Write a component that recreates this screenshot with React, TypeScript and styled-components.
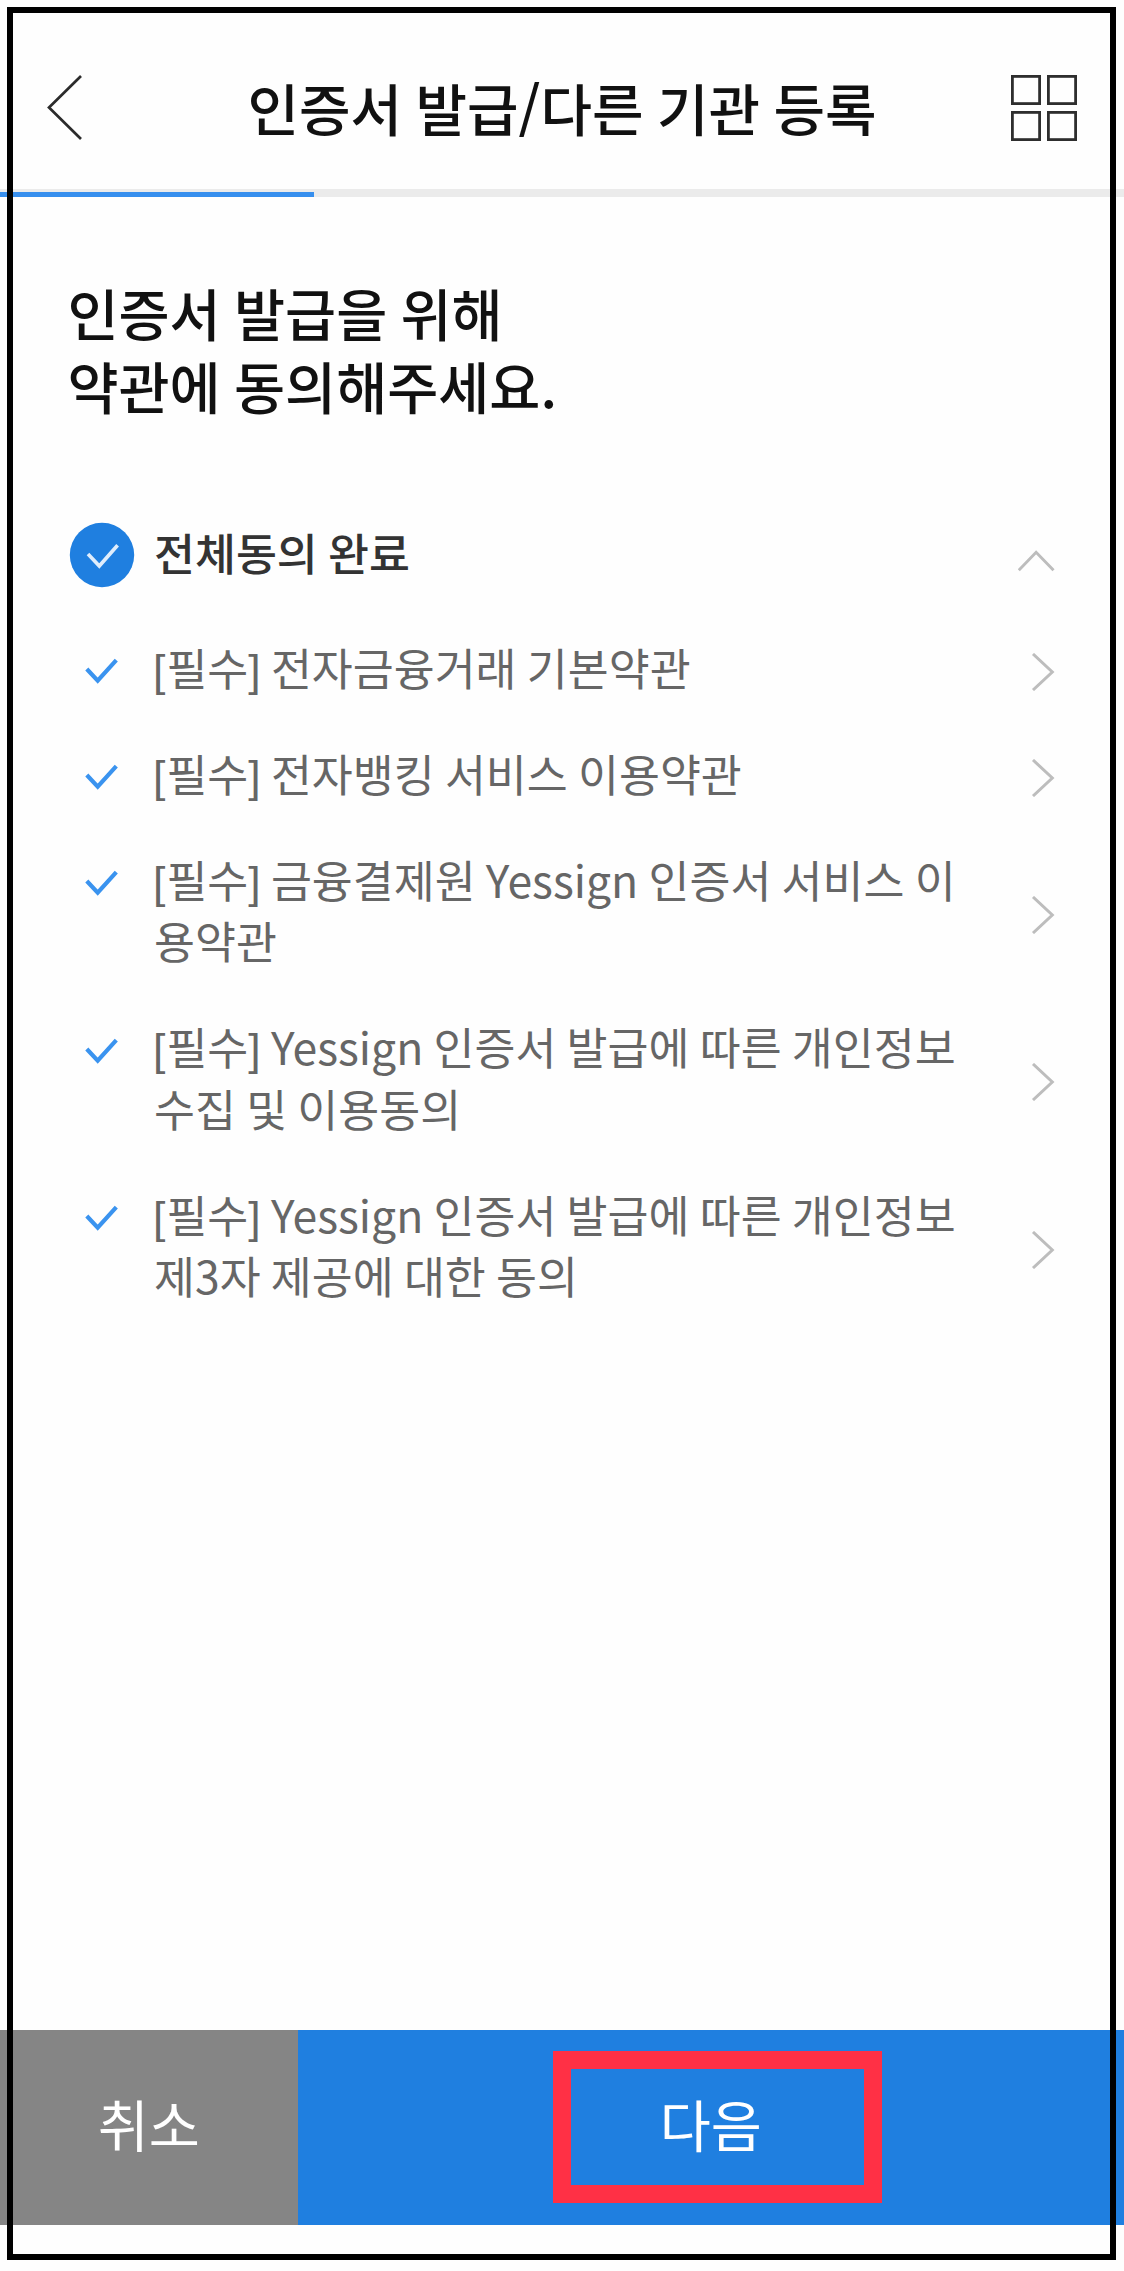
import React from 'react';
import styled, { createGlobalStyle } from 'styled-components';

const GlobalStyle = createGlobalStyle`
  * { box-sizing: border-box; }
  html, body { margin: 0; padding: 0; background: #fff; }
  body { font-family: "Noto Sans CJK KR", "Noto Sans", sans-serif; word-spacing: -2.2px; }
  button { font-family: inherit; border: 0; padding: 0; margin: 0; background: none; }
  svg { display: block; }
`;

const Screen = styled.div`
  position: relative;
  display: flex;
  flex-direction: column;
  width: 1124px;
  height: 2271px;
  overflow: hidden;
  background: #fefefe;
`;

const CaptureFrame = styled.div`
  position: absolute;
  inset: 7px 8px 11px 7px;
  border: 6px solid #000;
  pointer-events: none;
`;

const Header = styled.header`
  display: grid;
  grid-template-columns: 66px 1fr 66px;
  align-items: center;
  height: 189px;
  padding: 27px 47px 0 47px;
`;

const Title = styled.h1`
  margin: 0;
  padding-bottom: 3px;
  font-size: 56px;
  font-weight: 500;
  line-height: 80px;
  text-align: center;
  white-space: nowrap;
  color: #111;
`;

const IconButton = styled.button`
  display: flex;
`;

const ProgressTrack = styled.div`
  display: flex;
  align-items: flex-end;
  height: 8px;
  background: #ebebeb;
`;

const ProgressFill = styled.div`
  width: 314px;
  height: 5px;
  background: #378fee;
`;

const Content = styled.main`
  flex: 1;
  padding: 79px 69px 0;
`;

const Heading = styled.h2`
  margin: 0 0 0 -1.5px;
  font-size: 55.5px;
  font-weight: 500;
  line-height: 72.7px;
  color: #111;
`;

const AgreeAll = styled.div`
  display: grid;
  grid-template-columns: 66px 1fr 37px;
  column-gap: 19px;
  align-items: center;
  height: 66px;
  margin-top: 100.6px;
`;

const AgreeAllLabel = styled.span`
  font-size: 44.5px;
  font-weight: 500;
  line-height: 60px;
  margin-top: -6px;
  color: #333;
`;

const AgreeAllToggle = styled.button`
  display: flex;
  margin-top: 12px;
`;

const TermList = styled.ul`
  display: flex;
  flex-direction: column;
  gap: 44.5px;
  margin: 47.6px 0 0;
  padding: 0;
  list-style: none;
`;

const TermRow = styled.li`
  display: grid;
  grid-template-columns: 66px 1fr 24px;
  column-gap: 19px;
  align-items: center;
`;

const TermCheck = styled.span`
  align-self: start;
  padding: 22.5px 0 0 16px;
`;

const TermText = styled.span`
  font-size: 44.5px;
  font-weight: 400;
  line-height: 61.5px;
  white-space: nowrap;
  color: #666;
`;

const Bracket = styled.span<{ $close?: boolean }>`
  font-family: "Liberation Sans", sans-serif;
  line-height: 1;
  margin-left: ${(p) => (p.$close ? '0' : '-1px')};
  margin-right: ${(p) => (p.$close ? '0' : '1px')};
`;

const TermArrow = styled.span`
  padding-top: 11px;
`;

const Footer = styled.footer`
  display: flex;
  height: 195px;
  margin-bottom: 46px;
`;

const FooterButton = styled.button<{ $primary?: boolean }>`
  display: flex;
  align-items: center;
  justify-content: center;
  width: ${(p) => (p.$primary ? 'auto' : '297.5px')};
  flex: ${(p) => (p.$primary ? '1' : 'none')};
  padding-bottom: 9px;
  background: ${(p) => (p.$primary ? '#1f7fe0' : '#858585')};
  color: #fff;
  font-size: 55.5px;
  font-weight: 400;
  line-height: 80px;
`;

const Highlight = styled.span`
  position: absolute;
  left: 553px;
  top: 2051px;
  width: 329px;
  height: 152px;
  border: 18px solid #ff3045;
  pointer-events: none;
`;

interface Term {
  title: string;
  rest?: string;
}

const terms: Term[] = [
  { title: '전자금융거래 기본약관' },
  { title: '전자뱅킹 서비스 이용약관' },
  { title: '금융결제원 Yessign 인증서 서비스 이', rest: '용약관' },
  { title: 'Yessign 인증서 발급에 따른 개인정보', rest: '수집 및 이용동의' },
  { title: 'Yessign 인증서 발급에 따른 개인정보', rest: '제3자 제공에 대한 동의' },
];

const BackIcon = () => (
  <svg width="36" height="66" viewBox="0 0 36 66" fill="none" stroke="#2b2b2b" strokeWidth="2.7">
    <path d="M34 1 L2 32.5 L34 64" />
  </svg>
);

const MenuIcon = () => (
  <svg width="66" height="66" viewBox="0 0 66 66" fill="none" stroke="#2e2e2e" strokeWidth="2.8">
    <rect x="1.4" y="1.4" width="27.2" height="27.2" />
    <rect x="37.4" y="1.4" width="27.2" height="27.2" />
    <rect x="1.4" y="37.4" width="27.2" height="27.2" />
    <rect x="37.4" y="37.4" width="27.2" height="27.2" />
  </svg>
);

const CheckedCircle = () => (
  <svg width="66" height="66" viewBox="0 0 66 66" fill="none">
    <circle cx="33" cy="33" r="32.2" fill="#1f7fe0" />
    <path d="M19 32 L30.3 44 L48.6 23.2" stroke="#dfedfc" strokeWidth="3.6" />
  </svg>
);

const CheckIcon = () => (
  <svg width="34" height="28" viewBox="0 0 34 28" fill="none" stroke="#3a93ef" strokeWidth="4.2">
    <path d="M1.8 11 L12.7 22.6 L31.3 2.2" />
  </svg>
);

const ChevronUp = () => (
  <svg width="38" height="22" viewBox="0 0 38 22" fill="none" stroke="#bdbdbd" strokeWidth="3">
    <path d="M0.8 20.5 L18.6 2 L36.5 20.5" />
  </svg>
);

const ChevronRight = () => (
  <svg width="24" height="38" viewBox="0 0 24 38" fill="none" stroke="#bdbdbd" strokeWidth="3">
    <path d="M2 1 L21.3 19 L2 37" />
  </svg>
);

export default function App() {
  return (
    <Screen lang="ko">
      <GlobalStyle />
      <Header>
        <IconButton aria-label="뒤로">
          <BackIcon />
        </IconButton>
        <Title>인증서 발급/다른 기관 등록</Title>
        <IconButton aria-label="메뉴">
          <MenuIcon />
        </IconButton>
      </Header>
      <ProgressTrack>
        <ProgressFill />
      </ProgressTrack>
      <Content>
        <Heading>
          인증서 발급을 위해
          <br />
          약관에 동의해주세요.
        </Heading>
        <AgreeAll>
          <CheckedCircle />
          <AgreeAllLabel>전체동의 완료</AgreeAllLabel>
          <AgreeAllToggle aria-label="접기">
            <ChevronUp />
          </AgreeAllToggle>
        </AgreeAll>
        <TermList>
          {terms.map((term, i) => (
            <TermRow key={i}>
              <TermCheck>
                <CheckIcon />
              </TermCheck>
              <TermText>
                <Bracket>[</Bracket>필수<Bracket $close>]</Bracket> {term.title}
                {term.rest && (
                  <>
                    <br />
                    {term.rest}
                  </>
                )}
              </TermText>
              <TermArrow>
                <ChevronRight />
              </TermArrow>
            </TermRow>
          ))}
        </TermList>
      </Content>
      <Footer>
        <FooterButton>취소</FooterButton>
        <FooterButton $primary>다음</FooterButton>
      </Footer>
      <CaptureFrame />
      <Highlight />
    </Screen>
  );
}
